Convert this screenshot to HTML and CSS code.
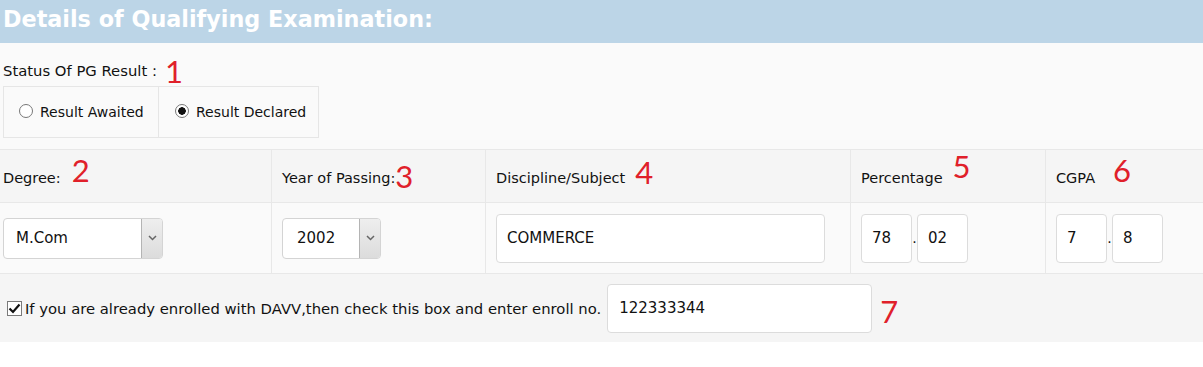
FILE: index.html
```html
<!DOCTYPE html>
<html lang="en">
  <head>
    <meta charset="UTF-8" />
    <meta name="viewport" content="width=device-width, initial-scale=1.0" />
    <title>Details of Qualifying Examination</title>
    <link rel="stylesheet" href="styles.css">
  </head>
  <body>
    <div class="section-head">
      <h2>Details of Qualifying Examination:</h2>
    </div>

    <div class="status">
      <div class="status-label">
        Status Of PG Result :<span class="num num-1">1</span>
      </div>
      <div class="radio-box">
        <label class="radio-cell">
          <input type="radio" name="pgResult" value="awaited" />Result Awaited
        </label>
        <label class="radio-cell">
          <input type="radio" name="pgResult" value="declared" checked />Result Declared
        </label>
      </div>
    </div>

    <div class="exam-grid">
      <div class="cell head">Degree:<span class="num num-2">2</span></div>
      <div class="cell head">Year of Passing:<span class="num num-3">3</span></div>
      <div class="cell head">Discipline/Subject<span class="num num-4">4</span></div>
      <div class="cell head">Percentage<span class="num num-5">5</span></div>
      <div class="cell head">CGPA<span class="num num-6">6</span></div>

      <div class="cell field">
        <div class="select-box degree">
          <select id="degree" name="degree">
            <option>M.Com</option>
            <option>M.Sc</option>
            <option>M.A</option>
          </select>
          <span class="arrow">
            <svg width="9" height="6" viewBox="0 0 9 6"><path d="M1 1l3.5 3.5L8 1" fill="none" stroke="#666" stroke-width="1.5"/></svg>
          </span>
        </div>
      </div>
      <div class="cell field">
        <div class="select-box year">
          <select id="year" name="year">
            <option>2002</option>
            <option>2003</option>
          </select>
          <span class="arrow">
            <svg width="9" height="6" viewBox="0 0 9 6"><path d="M1 1l3.5 3.5L8 1" fill="none" stroke="#666" stroke-width="1.5"/></svg>
          </span>
        </div>
      </div>
      <div class="cell field">
        <input type="text" class="text-input subject" name="subject" value="COMMERCE" />
      </div>
      <div class="cell field">
        <div class="split">
          <input type="text" class="text-input small" value="78" />
          <span class="dot">.</span>
          <input type="text" class="text-input small" value="02" />
        </div>
      </div>
      <div class="cell field">
        <div class="split">
          <input type="text" class="text-input small" value="7" />
          <span class="dot">.</span>
          <input type="text" class="text-input small" value="8" />
        </div>
      </div>
    </div>

    <div class="enroll-row">
      <span class="check">
        <svg width="13" height="11" viewBox="0 0 13 11"><path d="M1.5 5.5l3.5 3.5L11.5 1.5" fill="none" stroke="#111" stroke-width="2.2"/></svg>
      </span>
      <span class="enroll-text">If you are already enrolled with DAVV,then check this box and enter enroll no.</span>
      <input type="text" class="text-input enroll" name="enrollNo" value="122333344" />
      <span class="num num-7">7</span>
    </div>
  </body>
</html>
```

FILE: styles.css
```css
body {
  margin: 0;
  font-family: "DejaVu Sans", Verdana, sans-serif;
  font-size: 14.5px;
  color: #111;
  background-color: #ffffff;
}
.section-head {
  background-color: #bcd5e7;
  height: 43px;
  display: flex;
  align-items: center;
  padding: 0 3px;
}
h2 {
  margin: -6px 0 0;
  color: #ffffff;
  font-size: 22.3px;
  font-weight: bold;
}
.num {
  font-family: "Lato", "Open Sans", sans-serif;
  font-size: 31px;
  color: #e0202a;
  line-height: 1;
}
.status {
  background-color: #fafafa;
  padding: 0 3px 11px;
}
.status-label {
  height: 43px;
  box-sizing: border-box;
  display: flex;
  align-items: flex-end;
  line-height: 1;
  padding-bottom: 7px;
  font-size: 14.8px;
}
.status-label .num {
  margin-left: 8px;
  margin-bottom: -8px;
}
.radio-box {
  display: flex;
  width: 314px;
  height: 50px;
  border: 1px solid #e6e6e6;
  background-color: #fafafa;
  font-size: 14px;
}
.radio-cell {
  display: flex;
  align-items: center;
  padding-left: 15px;
}
.radio-cell + .radio-cell {
  border-left: 1px solid #e6e6e6;
  flex: 1;
  padding-left: 16px;
}
.radio-cell:first-child {
  width: 139px;
}
input[type="radio"] {
  appearance: none;
  width: 14px;
  height: 14px;
  margin: 0 7px 2px 0;
  border: 1px solid #777;
  border-radius: 50%;
  background-color: #fff;
}
input[type="radio"]:checked {
  background: radial-gradient(circle, #111 0 3.5px, #fff 4px);
}
.exam-grid {
  display: grid;
  grid-template-columns: 271px 214px 365px 195px 1fr;
  grid-template-rows: 53px 70px;
  border-top: 1px solid #e8e8e8;
}
.cell {
  display: flex;
  align-items: center;
  padding-left: 10px;
  border-left: 1px solid #e8e8e8;
}
.cell:nth-child(5n + 1) {
  border-left: none;
  padding-left: 3px;
}
.head {
  background-color: #f5f5f5;
  border-bottom: 1px solid #e8e8e8;
  padding-top: 3px;
}
.head .num {
  margin-left: 10px;
}
.head .num-2 {
  margin-left: 11px;
  margin-bottom: 14px;
}
.head .num-3 {
  margin-left: 0;
  margin-bottom: 2px;
}
.head .num-4 {
  margin-bottom: 10px;
}
.head .num-5 {
  margin-bottom: 22px;
}
.head .num-6 {
  margin-left: 18px;
  margin-bottom: 14px;
}
.field {
  background-color: #fafafa;
}
.select-box {
  display: flex;
  height: 41px;
  border: 1px solid #d4d4d4;
  border-radius: 4px;
  background-color: #fff;
  box-sizing: border-box;
  overflow: hidden;
}
.select-box.degree {
  width: 160px;
}
.select-box.year {
  width: 99px;
}
.select-box select {
  appearance: none;
  flex: 1;
  min-width: 0;
  border: none;
  background: transparent;
  font-family: inherit;
  font-size: 15px;
  color: #111;
  padding-left: 12px;
  outline: none;
}
.select-box.year select {
  padding-left: 14px;
}
.arrow {
  width: 20px;
  display: flex;
  align-items: center;
  justify-content: center;
  border-left: 1px solid #b4b4b4;
  background: linear-gradient(#eeeeee, #dcdcdc);
}
.text-input {
  height: 49px;
  box-sizing: border-box;
  border: 1px solid #dcdcdc;
  border-radius: 4px;
  background-color: #fff;
  font-family: inherit;
  font-size: 15px;
  color: #111;
  padding: 0 10px;
  outline: none;
}
.subject {
  width: 329px;
}
.split {
  display: flex;
  align-items: baseline;
}
.small {
  width: 51px;
}
.dot {
  width: 5px;
  text-align: center;
  font-size: 14px;
}
.enroll-row {
  display: flex;
  align-items: center;
  height: 69px;
  background-color: #f5f5f5;
  border-top: 1px solid #e8e8e8;
  box-sizing: border-box;
  padding-left: 7px;
}
.check {
  width: 13px;
  height: 13px;
  border: 1px solid #7a7a7a;
  background-color: #fff;
  display: flex;
  align-items: center;
  justify-content: center;
  margin-right: 3px;
}
.enroll-text {
  font-size: 14.8px;
  margin-right: 6px;
}
.enroll {
  width: 265px;
  padding-left: 11px;
}
.num-7 {
  margin-left: 8px;
  margin-top: 6px;
}
```
